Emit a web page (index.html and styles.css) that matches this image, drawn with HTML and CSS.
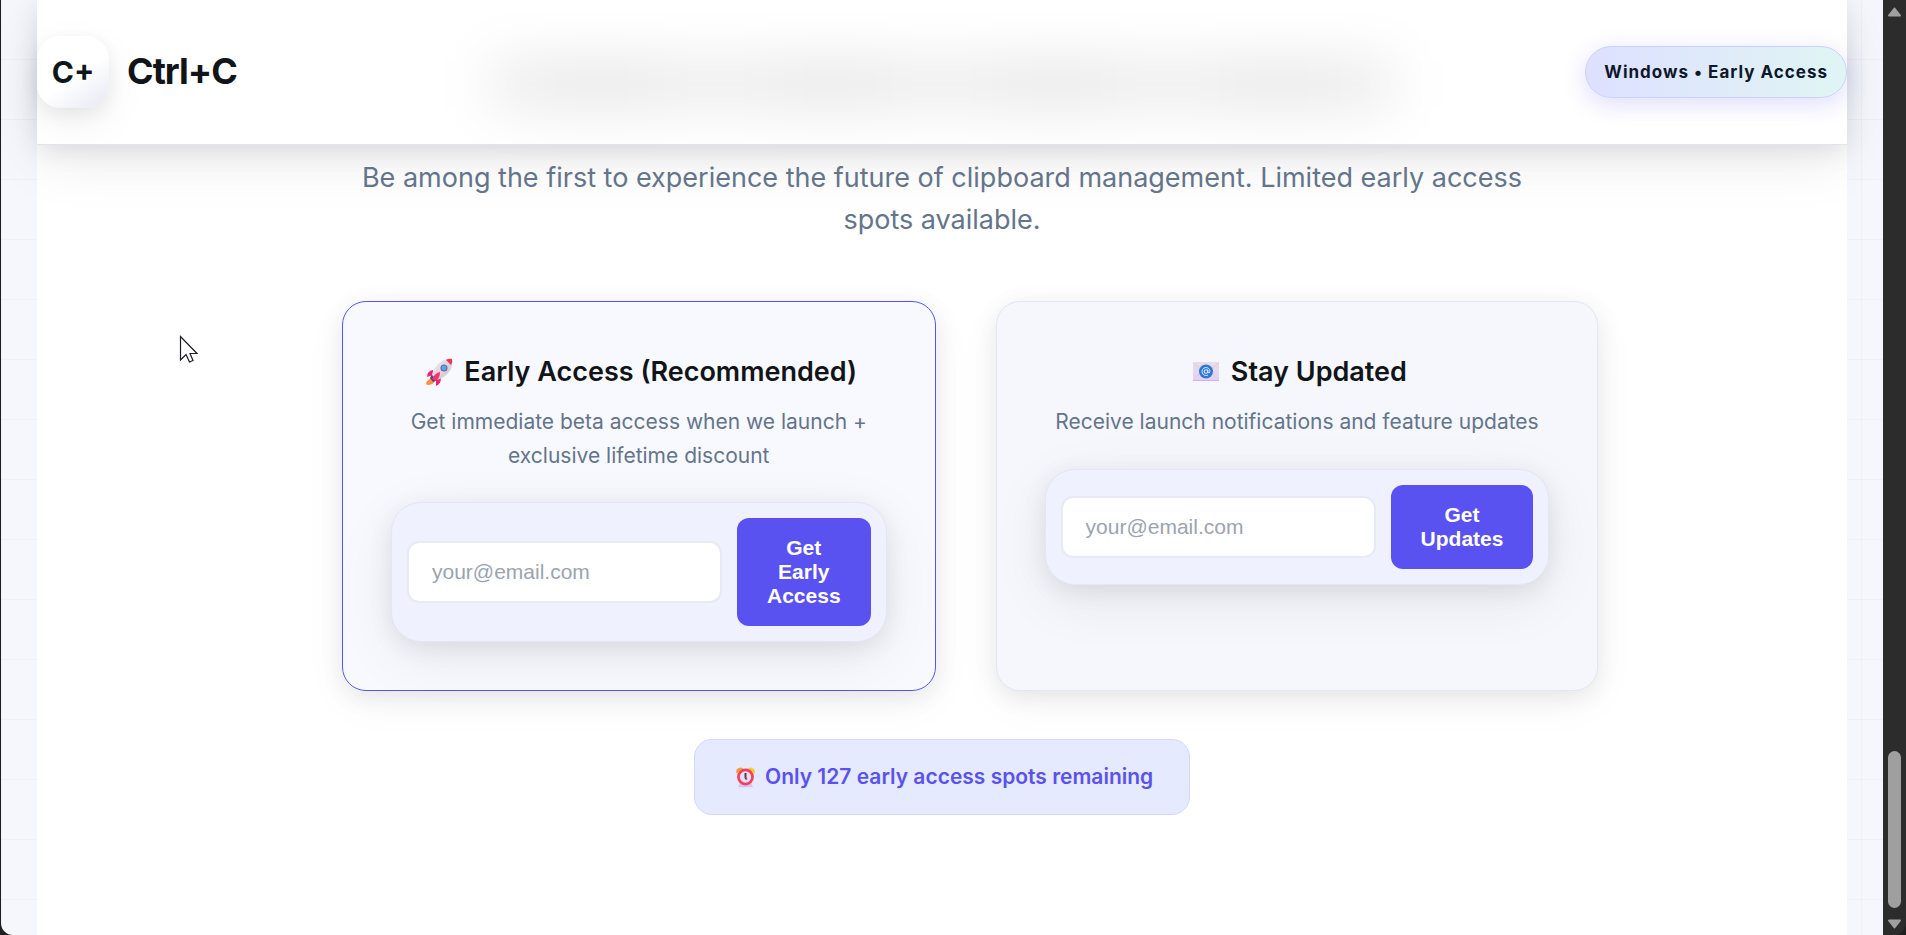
FILE: index.html
```html
<!DOCTYPE html>
<html lang="en">
<head>
<meta charset="utf-8">
<title>Ctrl+C</title>
<link rel="stylesheet" href="styles.css">
</head>
<body>
<div class="shell">
  <div class="page">
    <div class="container">
      <header class="topbar">
        <div class="haze" aria-hidden="true"><span></span><span></span><span></span><span></span></div>
        <div class="brand">
          <div class="brand-mark">C+</div>
          <div class="brand-name">Ctrl+C</div>
        </div>
        <div class="pill">Windows • Early Access</div>
      </header>
      <main class="content">
        <p class="lead">Be among the first to experience the future of clipboard management. Limited early access spots available.</p>
        <div class="cards">
          <section class="card card-featured">
            <h3><svg class="emoji" viewBox="0 0 37 30" aria-hidden="true">
              <defs><linearGradient id="hull" x1="0" y1="0" x2="1" y2="1"><stop offset="0" stop-color="#f3eef6"/><stop offset="1" stop-color="#cdbccf"/></linearGradient></defs>
              <path d="M11 21 6 25Q4 29 7 29Q12 29 14 25Z" fill="#fb923c"/>
              <path d="M12 14Q6 15 6 21L12 19ZM20 22Q20 28 15 30L15 23Z" fill="#f4226b"/>
              <path d="M11 18 16 24 12 26 9 22Z" fill="#54418a"/>
              <path d="M31 3Q23 2 17 8Q12 13 11 19L16 24Q23 22 28 16Q32 11 31 3Z" fill="url(#hull)"/>
              <path d="M31 3Q28 2 25 4L30 9Q32 6 31 3Z" fill="#f0364f"/>
              <path d="M19 16Q14 17 11 23L15 25Q19 22 19 16Z" fill="#f7346f"/>
              <circle cx="23" cy="12" r="3.5" fill="#6d6690"/><circle cx="23" cy="12" r="2.4" fill="#52a9f2"/>
            </svg> Early Access (Recommended)</h3>
            <p>Get immediate beta access when we launch + exclusive lifetime discount</p>
            <form class="signup">
              <input type="email" aria-label="Email for early access" placeholder="your@email.com">
              <button type="button">Get Early Access</button>
            </form>
          </section>
          <section class="card">
            <h3><svg class="emoji" viewBox="0 0 37 30" aria-hidden="true">
              <defs><linearGradient id="paper" x1="0" y1="0" x2="0" y2="1"><stop offset="0" stop-color="#e8dde6"/><stop offset="1" stop-color="#e3d0f6"/></linearGradient></defs>
              <rect x="6" y="6" width="26" height="19" rx="1" fill="url(#paper)"/>
              <path d="M6 7 19 17 32 7M6 25 15 15M32 25 23 15" fill="none" stroke="#dccde2" stroke-width="1"/>
              <path d="M6 24.500H32" stroke="#d2b0f0"/>
              <circle cx="19" cy="15.500" r="7" fill="#2f78d2"/>
              <circle cx="19" cy="15.500" r="1.800" fill="none" stroke="#d9e8ff" stroke-width="1.100"/>
              <path d="M20.800 13.500V16.500Q22.800 18 23 15A4 4 0 1 0 21 19" fill="none" stroke="#d9e8ff"/>
            </svg> Stay Updated</h3>
            <p>Receive launch notifications and feature updates</p>
            <form class="signup">
              <input type="email" aria-label="Email for updates" placeholder="your@email.com">
              <button type="button">Get Updates</button>
            </form>
          </section>
        </div>
        <div class="notice"><svg class="emoji" viewBox="0 0 37 30" aria-hidden="true">
          <path d="M9 28H28L26 23H11Z" fill="#d8c2f0"/>
          <path d="M7 11Q5 4 12 3Q15 3 16 5Z" fill="#e9a33b"/>
          <path d="M30 11Q32 4 25 3Q22 3 21 5Z" fill="#fcc934"/>
          <circle cx="18.500" cy="15" r="9" fill="#e9dff0" stroke="#f4405f" stroke-width="3.500"/>
          <path d="M18.500 10V16L20 18" fill="none" stroke="#433b6b" stroke-width="2.500"/><path d="M18.500 15 20.500 18" stroke="#f4405f" stroke-width="1"/>
        </svg> Only 127 early access spots remaining</div>
      </main>
    </div>
  </div>
  <div class="scrollbar" aria-hidden="true">
    <svg class="arrow" viewBox="0 0 15 11"><path d="M7.500 2 13 9H2Z"/></svg>
    <div class="track"><div class="thumb"></div></div>
    <svg class="arrow" viewBox="0 0 15 11"><path d="M7.500 9 2 2H13Z"/></svg>
  </div>
</div>
<svg class="cursor" viewBox="0 0 20 28" aria-hidden="true"><path d="M1.500 1.500V25L7 19.500 10.500 27 14 25.500 11 18.500H18Z" fill="#fff" stroke="#1b1b2b" stroke-width="1.200"/></svg>
</body>
</html>
```
FILE: styles.css
```css
* { box-sizing: border-box; }
body {
  margin: 0;
  background: #1f1f1f;
  color: #111418;
  font-family: Inter, "Liberation Sans", sans-serif;
  font-size: 21px;
  line-height: 1.6;
}
.shell { display: flex; height: 100vh; overflow: hidden; }
.page {
  flex: 1;
  margin-left: 1px;
  padding: 0 36px;
  overflow: hidden;
  border-bottom-left-radius: 12px;
  background-color: #f5f7fc;
  background-image:
    linear-gradient(rgba(90, 82, 240, 0.04) 1px, transparent 1px),
    linear-gradient(90deg, rgba(90, 82, 240, 0.04) 1px, transparent 1px);
  background-size: 60px 60px;
  background-position: 0 59px;
}
.container { min-height: 100%; background: #fff; }
.topbar {
  position: relative;
  display: flex;
  align-items: center;
  justify-content: space-between;
  padding: 36px 0;
  background: #fff;
  border-bottom: 1px solid #e2e5f0;
  box-shadow: 0 6px 24px rgba(0, 0, 0, 0.09), 0 15px 60px rgba(0, 0, 0, 0.08);
}
.haze {
  position: absolute;
  inset: 58px 25% 34px;
  display: flex;
  justify-content: space-around;
  background: rgba(0, 0, 0, 0.07);
  filter: blur(26px);
}
.haze span { width: 12%; background: rgba(0, 0, 0, 0.02); }
.brand { position: relative; display: flex; align-items: center; gap: 18px; }
.brand-mark {
  display: grid;
  place-items: center;
  width: 72px;
  height: 72px;
  border-radius: 24px;
  background: linear-gradient(145deg, #fff 55%, #e6e8f1);
  box-shadow: 0 6px 18px rgba(0, 0, 0, 0.07), 0 15px 45px rgba(0, 0, 0, 0.06);
  font-size: 30px;
  font-weight: 700;
}
.brand-name { font-size: 36px; font-weight: 700; letter-spacing: -1px; }
.pill {
  position: relative;
  padding: 11px 18px;
  border: 1px solid #cbd0ff;
  border-radius: 26px;
  background: linear-gradient(90deg, #dde0ff, #e0f5f4);
  box-shadow: 0 6px 24px rgba(90, 82, 240, 0.2);
  color: #0f172a;
  font-size: 17px;
  line-height: 28px;
  font-weight: 700;
  letter-spacing: 1px;
}
.content { padding-top: 12px; text-align: center; }
.lead { max-width: 1200px; margin: 0 auto 60px; color: #64748b; font-size: 27px; line-height: 42px; position: relative; }
.cards {
  display: grid;
  grid-template-columns: 1fr 1fr;
  gap: 60px;
  max-width: 1200px;
  margin: 0 auto 48px;
}
.card {
  padding: 48px;
  border: 1px solid #e4e7f1;
  border-radius: 24px;
  background: #f5f7fc;
  box-shadow: 0 6px 24px rgba(0, 0, 0, 0.08), 0 12px 48px rgba(0, 0, 0, 0.04);
}
.card-featured { border-color: #5a52f0; background: linear-gradient(180deg, #f8f9ff, #f7f9fe); }
.card h3 { margin: 0 0 12px; font-size: 27px; font-weight: 600; }
.card p { margin: 0 0 30px; color: #64748b; }
.emoji { width: 37px; height: 30px; vertical-align: -5px; }
.signup {
  display: flex;
  align-items: center;
  gap: 15px;
  padding: 15px;
  border: 1px solid #e4e7f1;
  border-radius: 30px;
  background: #eff1ff;
  box-shadow: 0 6px 24px rgba(0, 0, 0, 0.08), 0 15px 60px rgba(0, 0, 0, 0.07);
}
.signup input {
  flex: 1;
  width: 315px;
  min-width: 315px;
  padding: 17px 23px;
  border: 2px solid #e7eaf3;
  border-radius: 12px;
  background: #fff;
  font: 21px/24px "Liberation Sans", sans-serif;
}
.signup input::placeholder { color: #9ca3af; }
.signup button {
  padding: 18px 30px;
  border: 0;
  border-radius: 12px;
  background: #5a52f0;
  color: #fff;
  font: bold 21px/24px "Liberation Sans", sans-serif;
}
.notice {
  width: fit-content;
  margin: 0 auto;
  padding: 20px 36px;
  border: 1px solid #d3d7ff;
  border-radius: 18px;
  background: #e6eafe;
  color: #5a52f0;
  font-weight: 600;
}
.notice .emoji { width: 29px; height: 24px; }
.scrollbar {
  display: flex;
  flex-direction: column;
  align-items: center;
  width: 23px;
  padding: 6px 0 5px;
  background: #2c2c2c;
  border-bottom-right-radius: 12px;
}
.arrow { width: 15px; height: 12px; fill: #9f9f9f; stroke: #9f9f9f; stroke-width: 2; stroke-linejoin: round; }
.track { flex: 1; display: flex; align-items: flex-end; padding-bottom: 10px; }
.thumb { width: 13px; height: 157px; border-radius: 7px; background: #9f9f9f; }
.cursor { position: absolute; left: 179px; top: 335px; width: 20px; height: 28px; }
```
